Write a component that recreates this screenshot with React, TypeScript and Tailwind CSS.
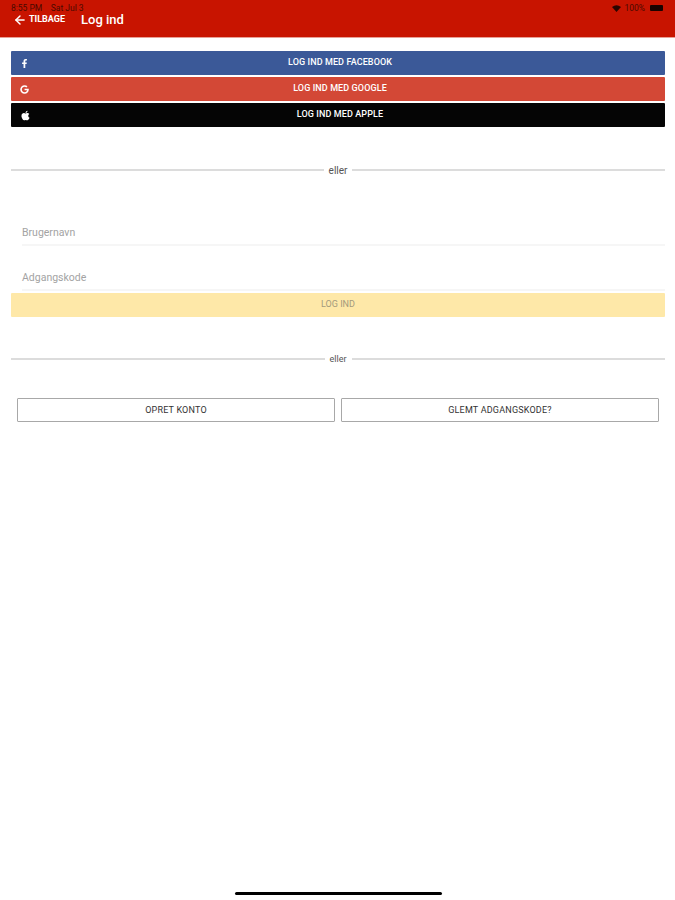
import React from "react";
import { FaApple, FaFacebookF, FaGoogle } from "react-icons/fa";
import { ArrowLeft } from "lucide-react";

const social = [
  { label: "LOG IND MED FACEBOOK", bg: "bg-[#3b5998]", icon: <FaFacebookF size={9} /> },
  { label: "LOG IND MED GOOGLE", bg: "bg-[#d34836]", icon: <FaGoogle size={9} /> },
  { label: "LOG IND MED APPLE", bg: "bg-[#050505]", icon: <FaApple size={11} /> },
];

function Divider({ className, text }: { className: string; text: string }) {
  return (
    <div className={`flex items-center ${className}`}>
      <div className="h-[2px] flex-1 bg-[#dcdcdc]" />
      <span className={`px-[5px] pt-[1px] leading-[15px] text-[#555] ${text}`}>eller</span>
      <div className="h-[2px] flex-1 bg-[#dcdcdc]" />
    </div>
  );
}

function Field({ label }: { label: string }) {
  return (
    <div className="ml-[11px] flex h-[45px] items-end border-b-2 border-[#f6f6f6] pb-[3px]">
      <span className="text-[10.5px] leading-4 text-[#a3a3a3]">{label}</span>
    </div>
  );
}

export default function App() {
  return (
    <div className="flex h-[900px] w-[675px] flex-col overflow-hidden bg-white font-['Roboto',sans-serif]">
      <header className="h-[38px] border-b border-[#e8a096] bg-[#c81400] text-white">
        <div className="flex h-[13px] items-center justify-between pl-[11px] pr-[12px] pt-[3px] text-[8.5px] text-[#4a0a00]">
          <span>8:55 PM&nbsp;&nbsp;&nbsp;&nbsp;Sat Jul 3</span>
          <div className="flex items-center gap-[3px]">
            <svg width="9" height="7" viewBox="0 0 9 7">
              <path d="M0 2 Q4.5 -1.5 9 2 L4.5 7 Z" fill="#2a0500" />
            </svg>
            <span>100%</span>
            <div className="ml-[2px] h-[6px] w-[13px] rounded-[1px] bg-[#1a0300]" />
          </div>
        </div>
        <div className="flex h-[13px] items-center pl-[13px]">
          <ArrowLeft size={14} strokeWidth={2.5} />
          <span className="ml-[2px] w-[52px] text-[9px] font-bold">TILBAGE</span>
          <span className="text-[13px] font-medium">Log ind</span>
        </div>
      </header>

      <main className="flex flex-1 flex-col pl-[11px] pr-[10px]">
        <div className="mt-[13px] flex flex-col gap-[2px]">
          {social.map((s) => (
            <div
              key={s.label}
              className={`relative flex h-[24px] items-center justify-center rounded-[1px] pl-[4px] text-[9px] font-medium tracking-[0.1px] text-white ${s.bg}`}
            >
              <span className="absolute left-[9px]">{s.icon}</span>
              {s.label}
            </div>
          ))}
        </div>

        <Divider className="mt-[35px]" text="text-[10px]" />

        <div className="mt-[23px]">
          <Field label="Brugernavn" />
          <Field label="Adgangskode" />
        </div>
        <div className="mt-[2px] flex h-[24px] items-center justify-center rounded-[1px] bg-[#fee8a8] text-[9px] text-[#a39a7c]">
          LOG IND
        </div>

        <Divider className="mt-[34px]" text="text-[9px]" />

        <div className="mt-[31px] flex gap-[6px] px-[6px]">
          <div className="flex h-[24px] flex-1 items-center justify-center rounded-[1px] border border-[#a8a8a8] pt-[1px] text-[9px] tracking-[0.2px] text-[#333]">
            OPRET KONTO
          </div>
          <div className="flex h-[24px] flex-1 items-center justify-center rounded-[1px] border border-[#a8a8a8] pt-[1px] text-[9px] tracking-[0.2px] text-[#333]">
            GLEMT ADGANGSKODE?
          </div>
        </div>
      </main>

      <div className="flex justify-center pb-[5px] pl-[1px]">
        <div className="h-[3px] w-[207px] rounded-full bg-black" />
      </div>
    </div>
  );
}
